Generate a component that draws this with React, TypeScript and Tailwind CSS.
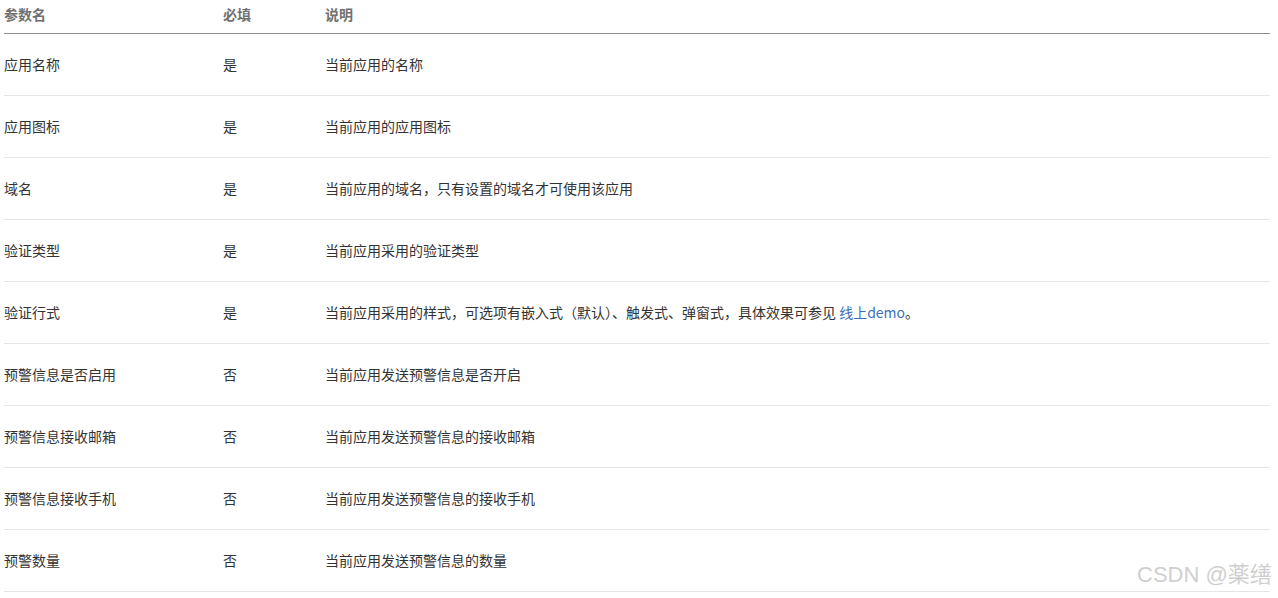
import React from "react"

const rows: { name: string; required: string; desc: React.ReactNode }[] = [
  { name: "应用名称", required: "是", desc: "当前应用的名称" },
  { name: "应用图标", required: "是", desc: "当前应用的应用图标" },
  { name: "域名", required: "是", desc: "当前应用的域名，只有设置的域名才可使用该应用" },
  { name: "验证类型", required: "是", desc: "当前应用采用的验证类型" },
  {
    name: "验证行式",
    required: "是",
    desc: (
      <>
        当前应用采用的样式，可选项有嵌入式（默认）、触发式、弹窗式，具体效果可参见{" "}
        <a className="text-[#3d6fbd]">线上demo</a>。
      </>
    ),
  },
  { name: "预警信息是否启用", required: "否", desc: "当前应用发送预警信息是否开启" },
  { name: "预警信息接收邮箱", required: "否", desc: "当前应用发送预警信息的接收邮箱" },
  { name: "预警信息接收手机", required: "否", desc: "当前应用发送预警信息的接收手机" },
  { name: "预警数量", required: "否", desc: "当前应用发送预警信息的数量" },
]

export default function App() {
  return (
    <div
      className="relative w-[1278px] h-[598px] bg-white overflow-hidden"
      style={{ fontFamily: '"Noto Sans CJK SC", "Noto Sans", sans-serif' }}
    >
      <div className="ml-[4px] w-[1266px]">
        {/* header */}
        <div className="flex h-[34px] border-b border-[#8f8f8f] pt-[4px] text-[14px] leading-[20px] font-semibold text-[#707070]">
          <div className="w-[219px]">参数名</div>
          <div className="w-[102px]">必填</div>
          <div className="flex-1">说明</div>
        </div>

        {rows.map((r) => (
          <div
            key={r.name}
            className="flex items-center h-[62px] border-b border-[#e6e6e6] text-[14px] text-[#333333]"
          >
            <div className="w-[219px]">{r.name}</div>
            <div className="w-[102px]">{r.required}</div>
            <div className="flex-1">{r.desc}</div>
          </div>
        ))}
      </div>

      {/* watermark */}
      <div className="absolute left-[1137px] top-[561px] text-[22px] leading-[28px] font-normal text-[#cfcfcf] font-['Liberation_Sans','Noto_Sans_CJK_SC',sans-serif]">
        CSDN @薬缮
      </div>
    </div>
  )
}
